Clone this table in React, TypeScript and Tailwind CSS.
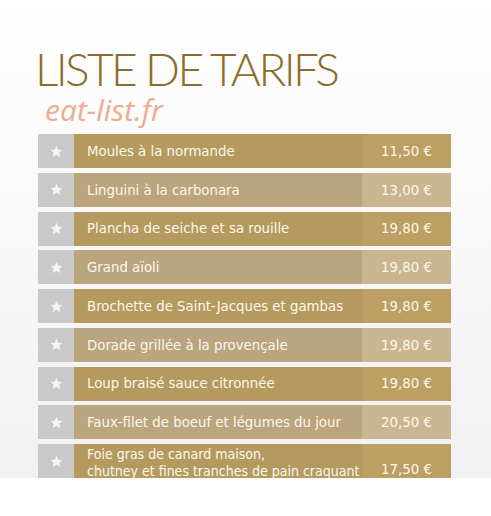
import React from "react"

const items = [
  { name: "Moules à la normande", price: "11,50 €" },
  { name: "Linguini à la carbonara", price: "13,00 €" },
  { name: "Plancha de seiche et sa rouille", price: "19,80 €" },
  { name: "Grand aïoli", price: "19,80 €" },
  { name: "Brochette de Saint-Jacques et gambas", price: "19,80 €" },
  { name: "Dorade grillée à la provençale", price: "19,80 €" },
  { name: "Loup braisé sauce citronnée", price: "19,80 €" },
  { name: "Faux-filet de boeuf et légumes du jour", price: "20,50 €" },
]

function Star() {
  return (
    <svg width="13" height="13" viewBox="0 0 24 24" fill="#f4f4f4">
      <path d="M12 1.5l3.2 7.1 7.6.7-5.7 5.1 1.7 7.6L12 18.1 5.2 22l1.7-7.6L1.2 9.3l7.6-.7z" />
    </svg>
  )
}

function Row({ name, price, dark }: { name: string; price: string; dark: boolean }) {
  return (
    <div className="flex h-[34px] text-[#fdf7ea]">
      <div className="w-[36px] shrink-0 bg-[#c9c9c9] flex items-center justify-center">
        <Star />
      </div>
      <div className={`flex-1 min-w-0 flex items-center pl-[13px] whitespace-nowrap ${dark ? "bg-[#b59a60]" : "bg-[#bba57f]"}`}>
        {name}
      </div>
      <div className={`w-[89px] shrink-0 flex items-center justify-center ${dark ? "bg-[#bc9f63]" : "bg-[#c9b58f]"}`}>
        {price}
      </div>
    </div>
  )
}

export default function App() {
  return (
    <div className="w-[491px] h-[516px] bg-white">
      <div className="h-[478px] overflow-hidden bg-gradient-to-b from-white to-[#f1f1f1]">
        <div className="pt-[46px] pl-[35px]">
          <h1
            className="text-[46px] leading-[46px] font-light text-[#8b6c2c] tracking-[-2.6px]"
            style={{ fontFamily: "Lato, sans-serif" }}
          >
            LISTE DE TARIFS
          </h1>
          <p
            className="mt-[1px] pl-[10px] text-[30px] leading-[34px] italic text-[#eeab8e]"
            style={{ fontFamily: "'Open Sans', sans-serif" }}
          >
            eat-list.fr
          </p>
        </div>
        <div
          className="mt-[7px] ml-[38px] w-[413px] flex flex-col gap-[4.75px] text-[14.8px] font-stretch-condensed"
          style={{ fontFamily: "'DejaVu Sans Condensed', 'DejaVu Sans', sans-serif" }}
        >
          {items.map((it, i) => (
            <Row key={i} name={it.name} price={it.price} dark={i % 2 === 0} />
          ))}
          <div className="flex h-[48px] text-[#fdf7ea]">
            <div className="w-[36px] shrink-0 bg-[#c9c9c9] flex items-start justify-center pt-[11px]">
              <Star />
            </div>
            <div className="flex-1 min-w-0 bg-[#b59a60] pl-[13px] pt-[2px] leading-[17px] whitespace-nowrap text-[14px]">
              Foie gras de canard maison,
              <br />
              chutney et fines tranches de pain craquant
            </div>
            <div className="w-[89px] shrink-0 bg-[#bc9f63] flex justify-center pt-[16px] leading-[17px]">
              17,50 €
            </div>
          </div>
        </div>
      </div>
    </div>
  )
}
